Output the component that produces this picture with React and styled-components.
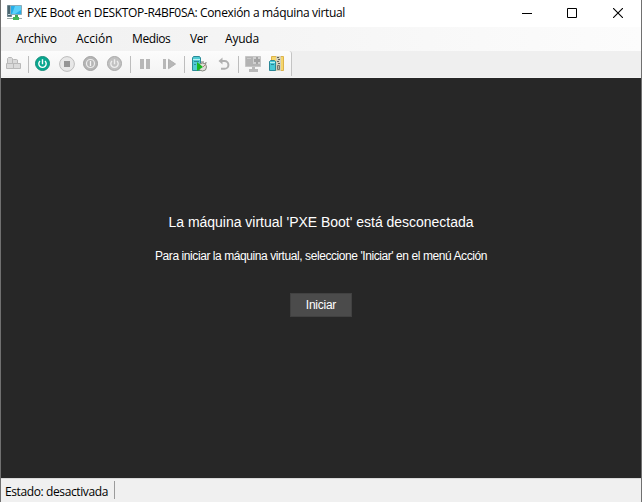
import React from "react";
import styled, { createGlobalStyle } from "styled-components";

const GlobalStyle = createGlobalStyle`
  * { box-sizing: border-box; }
  body { margin: 0; overflow: hidden; background: #f0f0f0; }
`;

const Window = styled.main`
  display: grid;
  grid-template-rows: 27px 24px 27px 400px 24px;
  width: 642px;
  height: 502px;
  border: solid #707070;
  border-width: 0 1px;
  background: #f0f0f0;
  color: #000;
  font: 12px/16px "Open Sans", "Noto Sans", sans-serif;
  white-space: nowrap;
`;
const TitleBar = styled.header`
  display: flex;
  align-items: flex-start;
  background: #fff;
  padding-left: 5px;
`;
const AppIcon = styled.svg`
  width: 17px;
  height: 17px;
  margin: 5px 4px 0 0;
`;
const Title = styled.h1`
  margin: 5px auto 0 0;
  font: inherit;
  letter-spacing: ${(p) => p.$tracking}px;
`;
const Controls = styled.div`
  display: flex;
`;
const ControlButton = styled.button`
  width: ${(p) => p.$width}px;
  height: 26px;
  padding: 0;
  border: 0;
  background: transparent;
  display: grid;
  place-items: center;
  &:last-child { padding-left: 1px; }
`;
const MenuBar = styled.nav`
  display: flex;
  padding-left: 15px;
  background: linear-gradient(90deg, #f0f0f0, #fcfcfc);
`;
const MenuItem = styled.span`
  width: ${(p) => p.$width}px;
  margin-right: 19px;
  padding-top: 4px;
  letter-spacing: ${(p) => p.$tracking}px;
`;
const Toolbar = styled.div`
  display: flex;
  height: 27px;
  background: #efefef;
  border-bottom: 1px solid #f3f3f3;
`;
const ToolStrip = styled.div`
  display: flex;
  align-items: flex-start;
  width: 291px;
  height: 25px;
  padding: 4px 0 0 4px;
  border-right: 1px solid #c4c4c4;
  border-radius: 0 3px 0 0;
  background: linear-gradient(#fcfcfc, #f3f3f3);
`;
const Tool = styled.svg`
  flex: none;
  width: 18px;
  height: 18px;
  margin-left: ${(p) => p.$gap}px;
`;
const Divider = styled.i`
  flex: none;
  width: 1px;
  height: 17px;
  margin: 1px 0 0 ${(p) => p.$gap}px;
  background: #bdbdbd;
`;
const Screen = styled.section`
  display: flex;
  flex-direction: column;
  align-items: center;
  background: #272727;
  color: #fff;
  font-family: "Liberation Sans", Arial, sans-serif;
`;
const Heading = styled.h2`
  margin: 135px 0 0;
  font-size: 14px;
  line-height: 18px;
  font-weight: 400;
  letter-spacing: -0.015px;
`;
const Message = styled.p`
  margin: 17px 0 0;
  font-size: 12px;
  line-height: 16px;
  letter-spacing: -0.425px;
`;
const StartButton = styled.button`
  width: 62px;
  height: 24px;
  margin-top: 29px;
  padding: 0;
  border: 1px solid #414141;
  background: #4b4b4b;
  color: #fff;
  font: 12px/16px "Liberation Sans", Arial, sans-serif;
  letter-spacing: -0.25px;
`;
const StatusBar = styled.footer`
  display: flex;
  padding: 5px 0 0 4px;
  border-top: 1px solid #d9d9d9;
  background: #f0f0f0;
`;
const Status = styled.span`
  width: 110px;
  height: 18px;
  margin-top: -3px;
  padding-top: 3px;
  border-right: 1px solid #9b9b9b;
  letter-spacing: -0.39px;
`;

const PowerGlyph = ({ color }) => (
  <path d="M9 4.5v5M6.5 6.2a3.7 3.7 0 1 0 5 0" fill="none" stroke={color} strokeWidth="1.4" />
);
const PowerTool = ({ gap, active }) => (
  <Tool $gap={gap} viewBox="0 0 18 18">
    <circle cx="8.5" cy="8.5" r="7" fill={active ? "#08a78f" : "#c1c1c1"} stroke={active ? "#168d7b" : "#aaa"} />
    <g transform="translate(-.5 -.3)"><PowerGlyph color={active ? "#fff" : "#eee"} /></g>
  </Tool>
);
const BoxesTool = () => (
  <Tool $gap={0} viewBox="0 0 18 18">
    <g fill="#dadada" stroke="#b9b9b9">
      <path d="M1.5 8.5h7v5h-7zM8.5 8.5h7v5h-7z" />
      <path d="M2.5 8.5v-5l1-1h3l1 1v5zM7.5 8.5V5l1-.5h3l1 .5v3.5z" />
    </g>
  </Tool>
);
const StopTool = () => (
  <Tool $gap={6} viewBox="0 0 18 18">
    <circle cx="9" cy="9" r="7.4" fill="#e7e7e7" stroke="#bdbdbd" />
    <path d="M6 6h6v6H6z" fill="#949494" />
  </Tool>
);
const ShutdownTool = () => (
  <Tool $gap={6} viewBox="0 0 18 18">
    <circle cx="8.5" cy="8.5" r="7" fill="#b6b6b6" stroke="#a2a2a2" />
    <circle cx="8.5" cy="8.5" r="4" fill="none" stroke="#ededed" strokeWidth="1.2" />
    <path d="M8.5 6v5" stroke="#f4f4f4" strokeWidth="1.3" />
  </Tool>
);
const PauseTool = () => (
  <Tool $gap={7} viewBox="0 0 18 18">
    <path d="M2 4h4v10H2zM8 4h4v10H8z" fill="#b7b7b7" />
  </Tool>
);
const StepTool = () => (
  <Tool $gap={6} viewBox="0 0 18 18">
    <path d="M1 4h3v10H1zM6.5 4.3l7 4.7-7 4.7z" fill="#b7b7b7" />
    <path d="M6.5 4.3l7 4.7-7 4.7z" fill="none" stroke="#b0b0b0" />
  </Tool>
);
const CheckpointTool = () => (
  <Tool $gap={6} viewBox="0 0 18 18">
    <path d="M1.5 3l1-1.5h6l1 1.5v12.5h-8z" fill="#4fcbd3" stroke="#2c8b98" />
    <path d="M2 4h7v1H2z" fill="#b5f1f2" />
    <path d="M3 6h5v1H3zM3 9h2v1H3z" fill="#2c8b98" />
    <circle cx="11.5" cy="12" r="4" fill="#deded8" stroke="#868880" />
    <path d="M10 7h3M14 8.5l1.5-1" stroke="#797b73" strokeWidth="1.2" />
    <path d="M6 7l6 5-6 4z" fill="#18b820" />
    <path d="M12 12l2-2" stroke="#b87472" />
  </Tool>
);
const RevertTool = () => (
  <Tool $gap={7} viewBox="0 0 18 18">
    <path d="M4 6h4.5a3.8 3.8 0 0 1 0 7.8H5" fill="none" stroke="#b1b1b1" strokeWidth="2" />
    <path d="M6.5 2.5v7L2.5 6z" fill="#b1b1b1" />
  </Tool>
);
const EnhancedTool = () => (
  <Tool $gap={5} viewBox="0 0 18 18">
    <path d="M1.5 1.5h15v10h-15z" fill="#b3b3b3" stroke="#c5c5c5" />
    <path d="M3 3h4v1H3z" fill="#c9c9c9" />
    <path d="M9 2h7v7H9z" fill="#d0d0d0" />
    <path d="M12 2h2v2h2v3h-2v2h-2V7h-2V4h2z" fill="#a3a3a3" />
    <path d="M8 12h3v2h3v3H5v-3h3z" fill="#b9b9b9" />
  </Tool>
);
const ZipTool = () => (
  <Tool $gap={6} viewBox="0 0 18 18">
    <path d="M3.5 1.5h12v14h-12z" fill="#f5d66c" stroke="#dcb34b" />
    <path d="M8 1h5v15H8z" fill="#d6d1bb" />
    <path d="M9 2h2v1H9zM10 4h2v1h-2zM9 6h2v1H9zM10 8h2v1h-2z" fill="#5f605a" />
    <path d="M9.5 10.5h2v4h-2z" fill="#b4b2a4" stroke="#777568" />
    <path d="M1.5 6.5l1-1h4l1 1v9h-6z" fill="#48c9d5" stroke="#2b8797" />
    <path d="M2 7h5v1H2z" fill="#b5f1f3" />
    <path d="M3 9h3v1H3z" fill="#2b8797" />
  </Tool>
);

const menus = [
  ["Archivo", 41, -0.15],
  ["Acción", 37, 0],
  ["Medios", 39, -0.4],
  ["Ver", 16, -0.5],
  ["Ayuda", 34, -0.2],
];

export default function App() {
  return (
    <>
      <GlobalStyle />
      <Window>
        <TitleBar>
          <AppIcon viewBox="0 0 17 17">
            <path d="M1.5.5h4v11h-4z" fill="#4b6670" stroke="#708790" />
            <path d="M2 9.5h3" stroke="#c5d9de" />
            <path d="M4.5.5h11v9h-11z" fill="#26aee9" stroke="#8aabb8" />
            <path d="M9 1h6v4L9 9H6z" fill="#5bd0f8" />
            <path d="M9 10h3v2H9z" fill="#42a457" />
            <path d="M7 12h6v3H7z" fill="#42b757" />
            <path d="M1 13h6v1H1zM13 13h3v1h-3z" fill="#9aaaa6" />
          </AppIcon>
          <Title $tracking={-0.33}>PXE Boot en DESKTOP-R4BF0SA: Conexión a máquina virtual</Title>
          <Controls>
            <ControlButton $width={46} aria-label="Minimizar">
              <svg width="10" height="10"><path d="M0 5.5h10" stroke="#000" /></svg>
            </ControlButton>
            <ControlButton $width={44} aria-label="Maximizar">
              <svg width="10" height="10"><path d="M.5.5h9v9h-9z" fill="none" stroke="#000" /></svg>
            </ControlButton>
            <ControlButton $width={47} aria-label="Cerrar">
              <svg width="10" height="10"><path d="M0 0l10 10M10 0L0 10" stroke="#000" strokeWidth="1.1" /></svg>
            </ControlButton>
          </Controls>
        </TitleBar>
        <MenuBar>
          {menus.map(([label, width, tracking]) => (
            <MenuItem key={label} $width={width} $tracking={tracking}>{label}</MenuItem>
          ))}
        </MenuBar>
        <Toolbar>
          <ToolStrip>
            <BoxesTool />
            <Divider $gap={5} />
            <PowerTool gap={5} active />
            <StopTool />
            <ShutdownTool />
            <PowerTool gap={6} />
            <Divider $gap={6} />
            <PauseTool />
            <StepTool />
            <Divider $gap={4} />
            <CheckpointTool />
            <RevertTool />
            <Divider $gap={4} />
            <EnhancedTool />
            <ZipTool />
          </ToolStrip>
        </Toolbar>
        <Screen>
          <Heading>La máquina virtual 'PXE Boot' está desconectada</Heading>
          <Message>Para iniciar la máquina virtual, seleccione 'Iniciar' en el menú Acción</Message>
          <StartButton>Iniciar</StartButton>
        </Screen>
        <StatusBar><Status>Estado: desactivada</Status></StatusBar>
      </Window>
    </>
  );
}
